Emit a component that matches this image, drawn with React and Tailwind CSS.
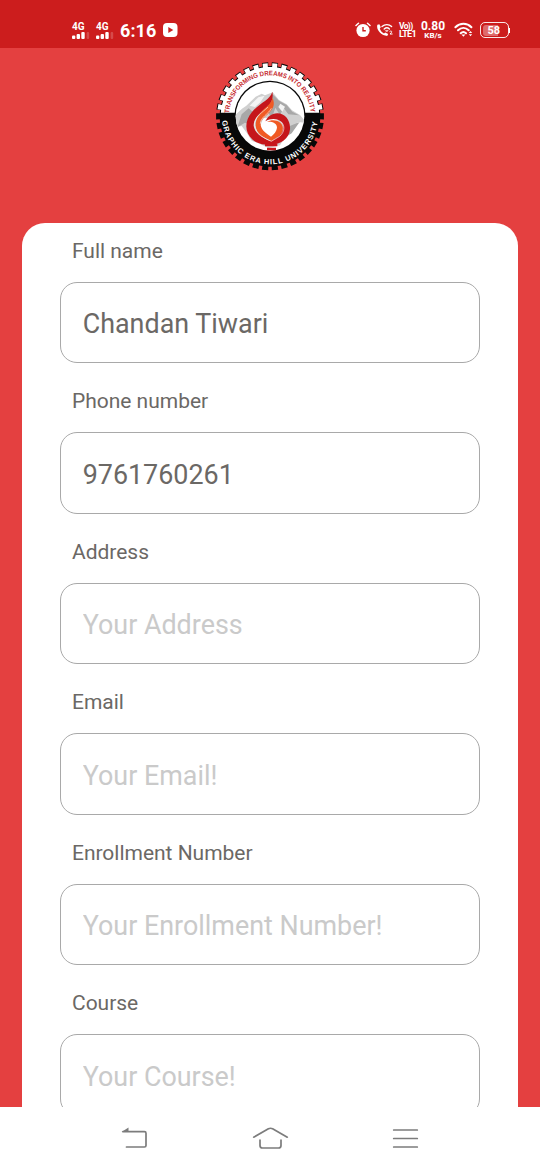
import React from "react";

const FIELDS = [
  { label: "Full name", placeholder: "Your Name", value: "Chandan Tiwari" },
  { label: "Phone number", placeholder: "Your Phone", value: "9761760261" },
  { label: "Address", placeholder: "Your Address" },
  { label: "Email", placeholder: "Your Email!" },
  { label: "Enrollment Number", placeholder: "Your Enrollment Number!" },
  { label: "Course", placeholder: "Your Course!" },
];

// Outline of a toothed wheel centred on (180, 175).
function gear(teeth, inner, outer, width) {
  const step = (Math.PI * 2) / teeth;
  const pts = [];
  for (let i = 0; i < teeth; i++) {
    const c = i * step - Math.PI / 2 + step / 2;
    const h = (step * width) / 2;
    [[inner, c - h], [outer, c - h], [outer, c + h], [inner, c + h]].forEach(([r, a]) =>
      pts.push(`${(180 + r * Math.cos(a)).toFixed(1)} ${(175 + r * Math.sin(a)).toFixed(1)}`)
    );
  }
  return "M" + pts.join("L") + "Z";
}

function Logo() {
  return (
    <svg className="h-[120px] w-[120px]" viewBox="0 0 360 360">
      <defs>
        <clipPath id="upper"><rect x="0" y="0" width="360" height="164" /></clipPath>
        <clipPath id="disc"><circle cx="180" cy="175" r="103" /></clipPath>
        <path id="arcTop" d="M57 175A123 123 0 0 1 303 175" />
        <path id="arcBottom" d="M36 175A144 144 0 0 0 324 175" />
      </defs>
      <path d={gear(34, 151, 162, 0.64)} fill="#080808" />
      <path d={gear(34, 148, 159, 0.53)} fill="#fff" clipPath="url(#upper)" />
      <circle cx="180" cy="175" r="107" fill="#080808" />
      <circle cx="180" cy="175" r="103" fill="#fff" />
      <g clipPath="url(#disc)">
        <path d="M70 176L96 152L109 143L137 116L155 107L165 112L188 103L207 126L230 139L246 157L270 171L290 195L264 192L253 213L235 222L210 262L175 270L150 258L125 248L111 226L95 204L75 207Z" fill="#d0d0d0" />
        <path d="M187 108L207 128L230 141L247 161L267 172L235 169L221 150L210 171L196 149L184 185L171 151ZM95 169L116 151L132 165L119 182L126 201L105 194L82 208ZM232 207L269 192L245 226L223 239Z" fill="#a8a8a8" />
        <path d="M145 118L164 113L151 133L135 147L119 143ZM211 137L225 146L217 161L205 147Z" fill="#f4f4f4" />
      </g>
      <path d="M160 180L200 182L212 205L184 240L146 216Z" fill="#fff" />
      <path d="M187 101C180 127 148 134 126 162C102 191 104 224 128 245C143 258 162 261 183 261C212 259 237 243 240 214C242 188 226 166 202 166C184 166 172 177 166 190C180 181 200 180 212 190C226 203 220 224 206 234L184 249C165 244 134 229 131 203C131 174 160 160 175 144C187 131 190 116 187 101Z" fill="#c5161b" />
      <path d="M188 119C184 140 160 150 147 170C132 191 134 216 152 233L184 249L208 234C220 222 223 205 211 194C201 185 183 184 170 192C186 190 201 196 201 209C200 220 192 228 183 236C166 226 150 212 152 196C154 179 179 169 188 150C194 139 191 129 188 119Z" fill="#f05a24" />
      <path d="M133 203C132 177 158 163 174 147M134 203C137 228 165 242 184 250L209 235C224 222 226 203 213 191M151 197C151 178 176 168 184 151" fill="none" stroke="#fff" strokeWidth="1.8" />
      <path d="M165 257H202V265H165ZM171 269H198V277H171Z" fill="#c9161c" />
      <text fill="#c5282d" fontSize="20" className="font-['Liberation_Sans'] font-bold">
        <textPath href="#arcTop" startOffset="9" textLength="365" lengthAdjust="spacingAndGlyphs">TRANSFORMING DREAMS INTO REALITY</textPath>
      </text>
      <text fill="#fff" fontSize="22.5" className="font-['Liberation_Sans'] font-bold">
        <textPath href="#arcBottom" startOffset="13" textLength="422" lengthAdjust="spacing">GRAPHIC ERA HILL UNIVERSITY</textPath>
      </text>
    </svg>
  );
}

function Signal() {
  return (
    <div className="flex w-[18px] flex-col">
      <span className="h-[10px] text-[10px] font-bold leading-[10px]">4G</span>
      <svg className="h-[7px] w-[18px]" viewBox="0 0 18 7" fill="#fff">
        <rect y="3.6" width="3.3" height="3.4" rx="1" />
        <rect x="4.6" y="2" width="3.4" height="5" rx="1" />
        <rect x="9.3" y="0" width="3.4" height="7" rx="1" />
        <rect x="14.6" y="0" width="2.6" height="7" rx="1" opacity=".2" />
      </svg>
    </div>
  );
}

function StatusBar() {
  return (
    <header className="flex h-12 shrink-0 items-start bg-[#cc1d1d] pt-[20px] text-white">
      <div className="flex h-5 items-center pl-[72px]">
        <div className="mt-px flex gap-[6px]"><Signal /><Signal /></div>
        <span className="ml-[6px] mt-px w-[37px] whitespace-nowrap text-[18px] font-bold leading-5 tracking-[0.1px]">6:16</span>
        <svg className="ml-[6px] h-[14px] w-[15px]" viewBox="0 0 15 14">
          <rect width="14.5" height="14" rx="4" fill="#fff" />
          <path d="M5.3 4L10.3 7L5.3 10Z" fill="#cc1d1d" />
        </svg>
      </div>
      <div className="ml-auto flex h-5 items-center pr-[30px]">
        <svg className="h-4 w-4" viewBox="0 0 16 16" fill="none">
          <circle cx="8" cy="8.5" r="6.6" fill="#fff" />
          <path d="M1 3.5L3.5 1.3M15 3.5L12.5 1.3" stroke="#fff" strokeWidth="1.5" strokeLinecap="round" />
          <path d="M8 5V8.8H10.8" stroke="#cc1d1d" strokeWidth="1.4" />
        </svg>
        <svg className="ml-[5px] h-4 w-[17px]" viewBox="0 0 17 16" fill="none" stroke="#fff" strokeLinecap="round">
          <path d="M1.4 2.8C-.2 7.5 5 13.7 11.2 13.9L12.2 12L9.2 10.6L8 11.6C6 10.6 4.4 8.6 3.8 6.6L4.8 5.2L3.4 2.3Z" fill="#fff" stroke="none" />
          <path d="M6 4.6C8.8 2 13 2 15.6 4.6M8.2 7C9.8 5.6 12 5.6 13.4 7" strokeWidth="1.4" />
          <path d="M9.6 8.4H12.2L10.9 9.8Z" fill="#fff" strokeWidth=".5" />
          <path d="M13.9 9.4C15.6 8.2 16.8 9.8 14 12H16.2" strokeWidth="1" />
        </svg>
        <div className="ml-[6px] flex w-[18px] flex-col text-[9px] font-bold leading-[8px]">
          <span className="whitespace-nowrap text-[8.5px] tracking-[-0.7px]">Vo<span className="tracking-[-0.4px]">))</span></span>
          <span className="whitespace-nowrap tracking-[-0.7px]">LTE1</span>
        </div>
        <div className="ml-[3px] flex w-[26px] flex-col items-center font-bold">
          <span className="text-[12px] leading-[11px]">0.80</span>
          <span className="text-[8px] leading-[8px]">KB/s</span>
        </div>
        <svg className="ml-[8px] h-4 w-[19px]" viewBox="0 0 19 16" fill="none" stroke="#fff" strokeWidth="2" strokeLinecap="round">
          <path d="M1.4 5.3C6 .7 13 .7 17.4 5.3M4 8.3C7.3 5.2 11.5 5.2 14.7 8.3M6.7 11.2C8.5 9.6 10.3 9.6 12 11.2" />
          <path d="M7.4 12.6L9.4 14.7L11.4 12.6Z" fill="#fff" stroke="none" />
          <path d="M14.8 11L16.5 8.9L18.2 11ZM14.8 12.2L16.5 14.3L18.2 12.2Z" fill="#fff" stroke="none" />
        </svg>
        <div className="ml-[7px] flex items-center">
          <div className="flex h-[16px] w-[29px] items-center rounded-[5px] border border-white/90 p-[1.5px]">
            <div className="h-full w-[15px] rounded-l-[3px] bg-white/35" />
            <span className="-ml-[10px] text-[11px] font-bold leading-none">58</span>
          </div>
          <div className="h-[5px] w-px bg-white" />
        </div>
      </div>
    </header>
  );
}

function Field({ label, placeholder, value }) {
  return (
    <label className="flex h-[150.5px] shrink-0 flex-col">
      <span className="pl-3 text-[21px] leading-[24px] tracking-[-0.02px] text-[#6b6865]">{label}</span>
      <input
        className="mt-[19px] h-[81.5px] w-full rounded-[17px] border-[1.5px] border-[#a9a9a9] bg-white px-[21.7px] pt-[3px] text-[26.9px] text-[#6b6865] outline-none placeholder:text-[#cacaca] placeholder:opacity-100"
        defaultValue={value}
        placeholder={placeholder}
      />
    </label>
  );
}

function NavBar() {
  return (
    <nav className="flex h-[63px] shrink-0 items-center justify-between bg-white pb-[2px] pl-[117px] pr-[121px]">
      <svg className="h-8 w-[36px]" viewBox="0 0 36 32" fill="none" stroke="#7c7c7c" strokeWidth="1.7" strokeLinecap="round" strokeLinejoin="round">
        <path d="M6 9.7H27.5Q29 9.7 29 11.2V23.5Q29 25 27.5 25H9.5" />
        <path d="M4.5 10L11.5 5.6V10Z" fill="#7c7c7c" stroke="none" />
      </svg>
      <svg className="ml-[4px] h-8 w-[38px]" viewBox="0 0 38 32" fill="none" stroke="#7c7c7c" strokeWidth="1.7" strokeLinecap="round">
        <path d="M2.7 15.2L17.4 6.8Q19.5 5.7 21.6 6.8L36.3 15.2M9 18V23.5Q9 26 11.5 26H27.5Q30 26 30 23.5V18" />
      </svg>
      <svg className="h-8 w-[36px]" viewBox="0 0 36 32" stroke="#7c7c7c" strokeWidth="1.7" strokeLinecap="round">
        <path d="M10.7 8H34.3M10.7 16.5H34.3M10.7 25H34.3" />
      </svg>
    </nav>
  );
}

export default function App() {
  return (
    <div className="flex h-[1170px] w-[540px] flex-col overflow-hidden bg-[#e44040] font-['Roboto',sans-serif]">
      <StatusBar />
      <div className="flex shrink-0 justify-center pt-[10px] pb-[45.4px]"><Logo /></div>
      <main className="mx-[22.4px] flex min-h-0 flex-1 flex-col overflow-hidden rounded-t-[23px] bg-white px-[37.6px] pt-[15.4px]">
        {FIELDS.map((f) => <Field key={f.label} {...f} />)}
      </main>
      <NavBar />
    </div>
  );
}
